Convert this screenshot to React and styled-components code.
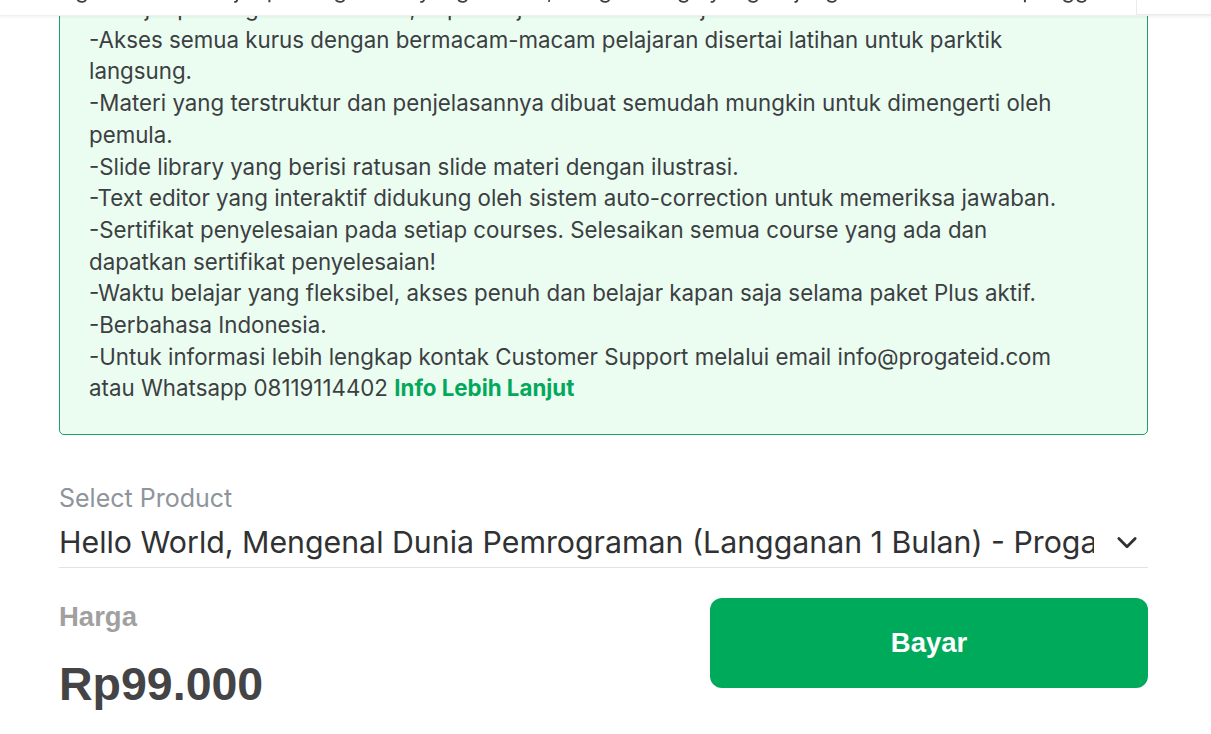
import React from "react";
import styled, { createGlobalStyle } from "styled-components";

const Global = createGlobalStyle`
  html, body { margin: 0; padding: 0; background: #ffffff; overflow: hidden; }
  body { font-family: Inter, "Noto Sans", sans-serif; color: #3c3f42; }
`;

const TopBar = styled.div`
  position: fixed;
  top: 0;
  left: 0;
  right: 0;
  height: 15px;
  display: flex;
  background: #ffffff;
  box-shadow: 0 1px 3px rgba(0, 0, 0, 0.06);
  border-bottom: 1px solid #f0f0f0;
  z-index: 10;
`;

const TopBarMain = styled.div`
  flex: 1;
  overflow: hidden;
  position: relative;
`;

const TopBarText = styled.div`
  font-size: 22px;
  line-height: 32px;
  color: #3c3f42;
  white-space: nowrap;
  padding-left: 40px;
  margin-top: -26px;
`;

const TopBarSide = styled.div`
  flex: 0 0 74px;
  border-left: 1px solid #ececec;
  border-bottom: 1px solid #ececec;
`;

const Page = styled.main`
  padding: 0 63px 0 59px;
  margin-top: -39px;
`;

const InfoBox = styled.section`
  background: #ebfcf1;
  border: 1px solid #1f9e6a;
  border-radius: 5px;
  padding: 30px 62px 30px 29px;
  font-size: 22.3px;
  line-height: 31.7px;
  color: #3c3f42;
`;

const Line = styled.div``;

const Link = styled.a`
  color: #03a85c;
  font-weight: 700;
  text-decoration: none;
`;

const Field = styled.div`
  margin-top: 47px;
  border-bottom: 1px solid #e3e3e3;
`;

const FieldLabel = styled.div`
  font-size: 25px;
  line-height: 32px;
  color: #8e949b;
`;

const SelectRow = styled.div`
  display: flex;
  align-items: center;
  margin-top: 3px;
  height: 50px;
`;

const SelectValue = styled.div`
  flex: 0 0 1035px;
  overflow: hidden;
  white-space: nowrap;
  font-size: 30.3px;
  color: #2f3133;
`;

const Chevron = styled.svg`
  margin-left: 19px;
  width: 28px;
  height: 28px;
`;

const Footer = styled.div`
  display: flex;
  justify-content: space-between;
  margin-top: 30px;
`;

const PriceCol = styled.div`
  display: flex;
  flex-direction: column;
  font-family: "Liberation Sans", Arial, sans-serif;
`;

const PriceLabel = styled.div`
  font-size: 27.5px;
  line-height: 38px;
  font-weight: 700;
  color: #a0a0a0;
`;

const PriceValue = styled.div`
  margin-top: 21px;
  font-size: 46.5px;
  line-height: 54px;
  font-weight: 700;
  color: #444446;
`;

const PayButton = styled.button`
  flex: 0 0 438px;
  height: 90px;
  border: none;
  border-radius: 12px;
  background: #00aa5b;
  color: #ffffff;
  font-family: "Liberation Sans", Arial, sans-serif;
  font-size: 27.5px;
  font-weight: 700;
  cursor: pointer;
`;

export default function App() {
  return (
    <>
      <Global />
      <TopBar>
        <TopBarMain>
          <TopBarText>
            Progate Plus · Belajar pemrograman yang mudah, dengan harga yang terjangkau untuk semua pengguna
          </TopBarText>
        </TopBarMain>
        <TopBarSide />
      </TopBar>
      <Page>
        <InfoBox>
          <Line>-Belajar pemrograman dari nol, kapan saja dan di mana saja.</Line>
          <Line>-Akses semua kurus dengan bermacam-macam pelajaran disertai latihan untuk parktik langsung.</Line>
          <Line>-Materi yang terstruktur dan penjelasannya dibuat semudah mungkin untuk dimengerti oleh pemula.</Line>
          <Line>-Slide library yang berisi ratusan slide materi dengan ilustrasi.</Line>
          <Line>-Text editor yang interaktif didukung oleh sistem auto-correction untuk memeriksa jawaban.</Line>
          <Line>-Sertifikat penyelesaian pada setiap courses. Selesaikan semua course yang ada dan dapatkan sertifikat penyelesaian!</Line>
          <Line>-Waktu belajar yang fleksibel, akses penuh dan belajar kapan saja selama paket Plus aktif.</Line>
          <Line>-Berbahasa Indonesia.</Line>
          <Line>
            -Untuk informasi lebih lengkap kontak Customer Support melalui email info@progateid.com atau Whatsapp 08119114402{" "}
            <Link href="#">Info Lebih Lanjut</Link>
          </Line>
        </InfoBox>
        <Field>
          <FieldLabel>Select Product</FieldLabel>
          <SelectRow>
            <SelectValue>Hello World, Mengenal Dunia Pemrograman (Langganan 1 Bulan) - Progate</SelectValue>
            <Chevron viewBox="0 0 24 24" fill="none" stroke="#2f3133" strokeWidth="2.4" strokeLinecap="round" strokeLinejoin="round">
              <path d="M5 9l7 7 7-7" />
            </Chevron>
          </SelectRow>
        </Field>
        <Footer>
          <PriceCol>
            <PriceLabel>Harga</PriceLabel>
            <PriceValue>Rp99.000</PriceValue>
          </PriceCol>
          <PayButton>Bayar</PayButton>
        </Footer>
      </Page>
    </>
  );
}
